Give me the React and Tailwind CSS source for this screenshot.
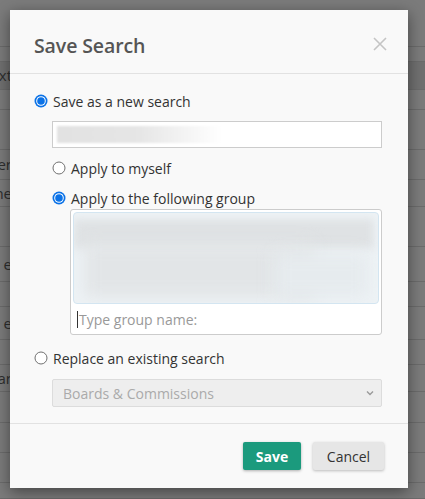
import React from "react";

const rows = [
  { h: 47, t: "" },
  { h: 15, t: "" },
  { h: 28, t: "xt", dark: true },
  { h: 20, t: "" },
  { h: 40, t: "" },
  { h: 30, t: "er" },
  { h: 27, t: "he" },
  { h: 40, t: "" },
  { h: 35, t: "e" },
  { h: 25, t: "" },
  { h: 33, t: "e" },
  { h: 25, t: "" },
  { h: 27, t: "ar" },
  { h: 31, t: "" },
  { h: 30, t: "" },
  { h: 30, t: "" },
  { h: 16, t: "" },
];

function Radio({ checked }) {
  return (
    <svg width="14" height="14" viewBox="0 0 14 14" className="shrink-0">
      {checked ? (
        <>
          <circle cx="7" cy="7" r="6.5" fill="#0b72e7" />
          <circle cx="7" cy="7" r="4.8" fill="#ffffff" />
          <circle cx="7" cy="7" r="3.8" fill="#0b72e7" />
        </>
      ) : (
        <circle cx="7" cy="7" r="6" fill="#ffffff" stroke="#707070" strokeWidth="1" />
      )}
    </svg>
  );
}

export default function App() {
  return (
    <div
      className="relative w-[425px] h-[499px] overflow-hidden bg-[#7b7b7b]"
      style={{ fontFamily: '"Open Sans", "Noto Sans", sans-serif' }}
    >
      <div className="flex flex-col">
        {rows.map((r, i) => (
          <div
            key={i}
            className={
              "flex items-center border-b border-[#6b6b6b] " +
              (r.dark ? "bg-[#707070]" : "")
            }
            style={{ height: r.h }}
          >
            <div className="w-[12px] overflow-hidden flex justify-end">
              <span className="text-[15px] text-[#2e2e2e] whitespace-nowrap">{r.t}</span>
            </div>
          </div>
        ))}
      </div>

      <div className="absolute left-[10px] top-[10px] w-[398px] h-[478px] bg-[#f9f9f9] shadow-[0_4px_14px_rgba(0,0,0,0.45)] flex flex-col">
        <div className="h-[64px] shrink-0 border-b border-[#e2e2e2] flex items-center justify-between pl-6 pr-[21px] pt-2">
          <span className="text-[19.5px] font-semibold text-[#555555] tracking-[-0.1px]">Save Search</span>
          <svg width="14" height="14" viewBox="0 0 14 14" className="-mt-[3px]">
            <path d="M1 1L13 13M13 1L1 13" stroke="#c4c4c4" strokeWidth="1.6" />
          </svg>
        </div>

        <div className="px-6 pt-[17px] pb-4 flex flex-col text-[14px] text-[#333333]">
          <label className="h-5 flex items-center gap-[5px]">
            <Radio checked />
            <span>Save as a new search</span>
          </label>

          <div className="mt-[10px] ml-[18px] w-[330px] h-[27px] border border-[#cccccc] bg-white flex items-center px-[4px] overflow-hidden">
            <div className="h-[17px] w-[165px] bg-gradient-to-r from-[#e2e2e2] via-[#e6e6e6] to-[#ffffff] blur-[1px]" />
          </div>

          <label className="mt-[10px] ml-[18px] h-5 flex items-center gap-[5px]">
            <Radio />
            <span>Apply to myself</span>
          </label>

          <label className="mt-[10px] ml-[18px] h-5 flex items-center gap-[5px]">
            <Radio checked />
            <span>Apply to the following group</span>
          </label>

          <div className="mt-[1px] ml-[36px] w-[312px] h-[126px] border border-[#cccccc] rounded-[3px] bg-white flex flex-col">
            <div className="relative mx-[2px] mt-[2px] h-[92px] rounded-[4px] border border-[#d3e5f1] bg-[#eef3f6] overflow-hidden">
              <div className="absolute left-0 top-[6px] w-[300px] h-[30px] bg-[#dfe2e4] blur-[4px]" />
              <div className="absolute left-[10px] top-[30px] w-[230px] h-[55px] bg-[#e2e5e7] blur-[8px]" />
              <div className="absolute left-[200px] top-[40px] w-[95px] h-[45px] bg-[#e6ebee] blur-[8px]" />
            </div>
            <div className="flex-1 flex items-center pl-[6px] text-[14px] text-[#999999]">
              <span className="w-px h-[17px] bg-[#333333] mr-[1px]" />
              <span>Type group name:</span>
            </div>
          </div>

          <label className="mt-[13px] h-5 flex items-center gap-[5px]">
            <Radio />
            <span>Replace an existing search</span>
          </label>

          <div className="mt-[11px] ml-[18px] w-[330px] h-[28px] border border-[#dcdcdc] rounded-[2px] bg-[#eeeeee] flex items-center justify-between pl-[10px] pr-[6px]">
            <span className="text-[#aaaaaa]">Boards &amp; Commissions</span>
            <svg width="10" height="8" viewBox="0 0 10 8">
              <path d="M2 2.5L5 5.5L8 2.5" stroke="#9a9a9a" strokeWidth="1.4" fill="none" />
            </svg>
          </div>
        </div>

        <div className="border-t border-[#e2e2e2] flex justify-end gap-3 pr-6 pt-[18px]">
          <button className="h-[28px] w-[58px] rounded-[2px] bg-[#1b9a7d] text-white text-[14px] font-bold shadow-[0_1px_3px_rgba(0,0,0,0.3)]">
            Save
          </button>
          <button className="h-[28px] w-[71px] rounded-[2px] bg-[#e6e6e6] text-[#333333] text-[14px] shadow-[0_1px_3px_rgba(0,0,0,0.25)]">
            Cancel
          </button>
        </div>
      </div>
    </div>
  );
}
